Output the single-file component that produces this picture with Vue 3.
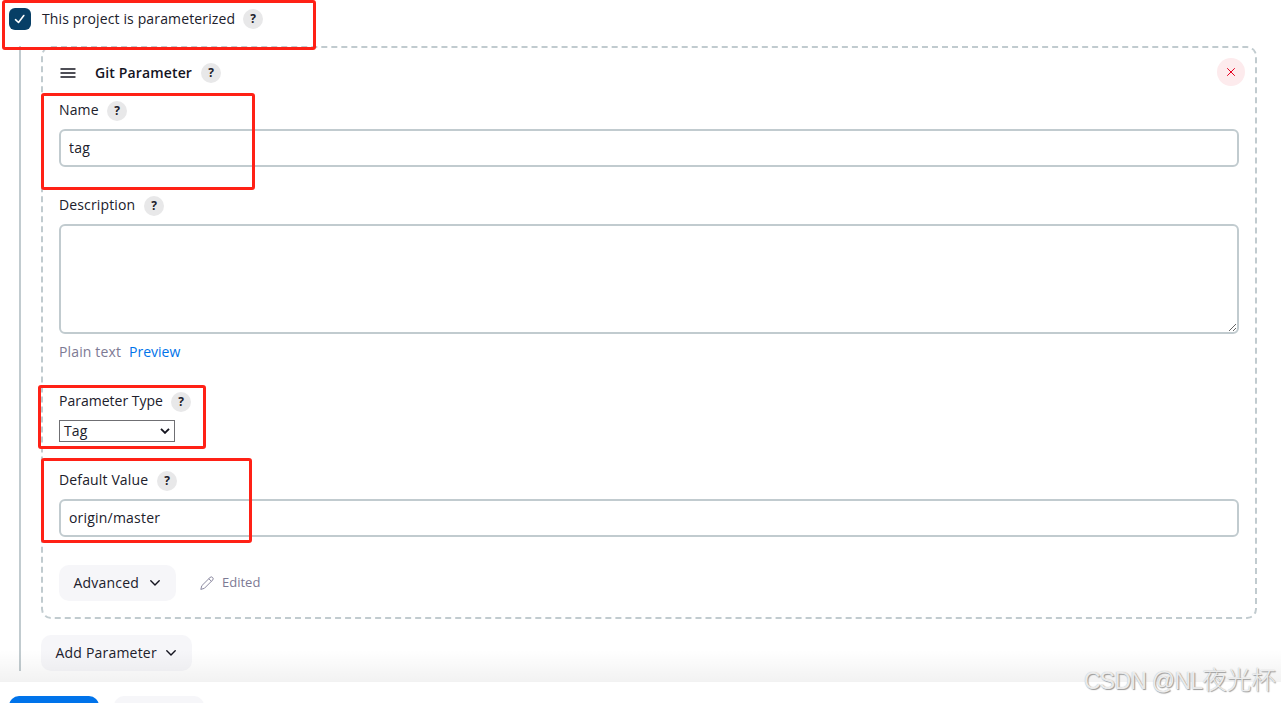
<script setup>
import { ref } from 'vue'

const parameterized = ref(true)
const name = ref('tag')
const description = ref('')
const type = ref('Tag')
const defaultValue = ref('origin/master')
</script>

<template>
  <div class="page">
    <div class="toggle-row">
      <button
        type="button"
        class="checkbox"
        role="checkbox"
        :aria-checked="parameterized"
        @click="parameterized = !parameterized"
      >
        <svg v-if="parameterized" viewBox="0 0 22 22" width="22" height="22">
          <path d="M6.500 11.700l3 2.800 5.300-7" fill="none" stroke="#fff" stroke-width="1.600" stroke-linecap="round" stroke-linejoin="round" />
        </svg>
      </button>
      <span class="toggle-label">This project is parameterized</span>
      <span class="help">?</span>
    </div>

    <div class="nested">
      <section class="chunk">
        <header class="chunk-header">
          <svg class="handle" viewBox="0 0 16 12" width="16" height="12">
            <path d="M1 3h14M1 7h14M1 11h14" stroke="#14141f" stroke-width="1.4" stroke-linecap="round" />
          </svg>
          <span class="title">Git Parameter</span>
          <span class="help">?</span>
          <button type="button" class="remove" aria-label="Delete">
            <svg viewBox="0 0 10 10" width="10" height="10">
              <path d="M1.200 1.200l7.600 7.600M8.800 1.200l-7.600 7.600" stroke="#e6001f" stroke-width="1" />
            </svg>
          </button>
        </header>

        <div class="field name">
          <div class="label"><span class="t-name">Name</span><span class="help">?</span></div>
          <input v-model="name" class="input" type="text" />
        </div>

        <div class="field description">
          <div class="label"><span class="t-desc">Description</span><span class="help">?</span></div>
          <textarea v-model="description" class="input area" />
          <div class="preview"><span class="plain">Plain text</span><a>Preview</a></div>
        </div>

        <div class="field type">
          <div class="label"><span class="t-type">Parameter Type</span><span class="help">?</span></div>
          <div class="select">
            <span>{{ type }}</span>
            <svg viewBox="0 0 10 6" width="10" height="6">
              <path d="M1 .8l4 4 4-4" fill="none" stroke="#14141f" stroke-width="1.9" />
            </svg>
          </div>
        </div>

        <div class="field default">
          <div class="label"><span class="t-default">Default Value</span><span class="help">?</span></div>
          <input v-model="defaultValue" class="input origin" type="text" />
        </div>

        <div class="actions">
          <button type="button" class="btn advanced">
            <span>Advanced</span>
            <svg viewBox="0 0 10 6" width="10" height="6">
              <path d="M.8 .8L5 5 9.200 .8" fill="none" stroke="#14141f" stroke-width="1.4" stroke-linecap="round" stroke-linejoin="round" />
            </svg>
          </button>
          <svg class="pencil" viewBox="0 0 16 16" width="16" height="16">
            <path d="M1.800 14.400l1-3.700L11 2.500a1.800 1.800 0 0 1 2.600 2.600L5.400 13.300zM9.800 3.700l2.600 2.600" fill="none" stroke="#7d7a94" stroke-width=".9" stroke-linejoin="round" />
          </svg>
          <span class="edited">Edited</span>
        </div>
      </section>

      <button type="button" class="btn add">
        <span>Add Parameter</span>
        <svg viewBox="0 0 10 6" width="10" height="6">
          <path d="M.8 .8L5 5 9.200 .8" fill="none" stroke="#14141f" stroke-width="1.4" stroke-linecap="round" stroke-linejoin="round" />
        </svg>
      </button>
    </div>

    <footer class="bottom-bar">
      <span class="save" />
      <span class="apply" />
    </footer>

    <div class="mark mark-toggle" />
    <div class="mark mark-name" />
    <div class="mark mark-type" />
    <div class="mark mark-default" />
    <div class="watermark"><span class="latin">CSDN @NL</span>夜光杯</div>
  </div>
</template>

<style>
body {
  margin: 0;
  overflow: hidden;
}
</style>

<style scoped>
.page {
  position: relative;
  box-sizing: border-box;
  height: 703px;
  padding: 8px 0 0 9px;
  overflow: hidden;
  background: #fff;
  color: #20202b;
  font-family: "Open Sans", "Noto Sans", sans-serif;
  font-size: 14px;
  line-height: 20px;
  letter-spacing: 0.14px;
}

.page * {
  box-sizing: border-box;
}

button {
  border: none;
  padding: 0;
  color: inherit;
  font: inherit;
  letter-spacing: inherit;
  cursor: pointer;
}

svg {
  display: block;
  flex: none;
}

.toggle-row {
  display: flex;
  align-items: center;
  height: 22px;
}

.checkbox {
  width: 22px;
  height: 22px;
  border-radius: 6px;
  background: #073f66;
}

.toggle-label {
  width: 193px;
  margin-left: 11px;
  white-space: nowrap;
}

.help {
  display: flex;
  align-items: center;
  justify-content: center;
  flex: none;
  width: 20px;
  height: 20px;
  margin-left: 8px;
  border-radius: 50%;
  background: #e8e8e9;
  font-size: 12px;
  font-weight: 700;
  letter-spacing: 0;
}

.nested {
  height: 625px;
  margin: 16px 24px 0 10px;
  padding-left: 20px;
  border-left: 2px solid #c1cbcf;
}

.chunk {
  height: 573px;
  padding: 10px 16px 0;
  border: 2px dashed #c1cbcf;
  border-radius: 10px;
}

.chunk-header {
  display: flex;
  align-items: center;
  height: 28px;
}

.chunk-header .help {
  margin-top: 1px;
}

.handle {
  margin-left: 1px;
}

.title {
  width: 98px;
  margin: 2px 0 0 19px;
  color: #14141f;
  font-weight: 600;
  white-space: nowrap;
}

.remove {
  display: flex;
  align-items: center;
  justify-content: center;
  width: 28px;
  height: 28px;
  margin: 0 -6px 0 auto;
  border-radius: 50%;
  background: #fdebed;
}

.label {
  display: flex;
  align-items: center;
  height: 20px;
  margin-bottom: 8px;
  white-space: nowrap;
}

.label span:first-child {
  position: relative;
  top: -1px;
}

.field.name {
  margin-top: 15px;
}

.field.description {
  margin-top: 29px;
}

.field.type {
  margin-top: 30px;
}

.field.default {
  margin-top: 29px;
}

.t-name {
  width: 40px;
}

.t-desc {
  width: 77px;
}

.t-type {
  width: 104px;
  letter-spacing: 0;
}

.t-default {
  width: 90px;
}

.input {
  display: block;
  width: 100%;
  height: 38px;
  padding: 0 8px 2px;
  border: 2px solid #c1cbcf;
  border-radius: 6px;
  outline: none;
  background: #fff;
  color: inherit;
  font: inherit;
  letter-spacing: 0.2px;
}

.area {
  height: 110px;
  resize: vertical;
}

.preview {
  display: flex;
  height: 20px;
  margin-top: 8px;
  color: #7d7a94;
}

.plain {
  width: 70px;
}

.preview a {
  color: #0073ea;
  letter-spacing: 0;
}

.select {
  display: flex;
  align-items: center;
  justify-content: space-between;
  width: 116px;
  height: 22px;
  padding: 0 4px;
  border: 1px solid #6f6f73;
}

.actions {
  display: flex;
  align-items: center;
  margin-top: 28px;
}

.btn {
  display: flex;
  align-items: center;
  justify-content: space-between;
  height: 36px;
  padding: 0 16px 0 14.500px;
  border-radius: 10px;
  background: #f6f6f9;
  letter-spacing: 0.2px;
  white-space: nowrap;
}

.advanced {
  width: 117px;
}

.add {
  width: 151px;
  margin-top: 16px;
}

.pencil {
  margin-left: 23px;
}

.edited {
  margin: -2px 0 0 7px;
  color: #7d7a94;
  font-size: 13px;
  letter-spacing: 0;
}

.bottom-bar {
  position: relative;
  display: flex;
  gap: 15px;
  height: 60px;
  margin: 11px 0 0 -9px;
  padding: 14px 9px 0;
  background: #fff;
}

.bottom-bar::before {
  content: '';
  position: absolute;
  right: 0;
  bottom: 100%;
  left: 0;
  height: 32px;
  background: linear-gradient(rgba(0, 0, 0, 0), rgba(0, 0, 0, 0.05));
}

.save,
.apply {
  width: 90px;
  height: 36px;
  border-radius: 10px;
  background: #0073ea;
}

.apply {
  background: #f6f6f9;
}

.mark {
  position: absolute;
  border: 3px solid #ff2116;
  border-radius: 3px;
  pointer-events: none;
}

.mark-toggle {
  top: 0;
  left: 2px;
  width: 314px;
  height: 50px;
}

.mark-name {
  top: 93px;
  left: 41px;
  width: 214px;
  height: 97px;
}

.mark-type {
  top: 385px;
  left: 38px;
  width: 168px;
  height: 64px;
}

.mark-default {
  top: 458px;
  left: 41px;
  width: 211px;
  height: 85px;
}

.watermark {
  position: absolute;
  top: 665px;
  left: 1084px;
  color: rgba(255, 255, 255, 0.8);
  font-family: "Liberation Sans", "Noto Sans CJK SC", sans-serif;
  font-size: 24.500px;
  font-weight: 300;
  line-height: 32px;
  letter-spacing: 0;
  white-space: nowrap;
  text-shadow: 1px 1px 1px #999, 0 0 1px #aaa;
}

.latin {
  font-size: 23px;
  letter-spacing: -0.75px;
}
</style>
